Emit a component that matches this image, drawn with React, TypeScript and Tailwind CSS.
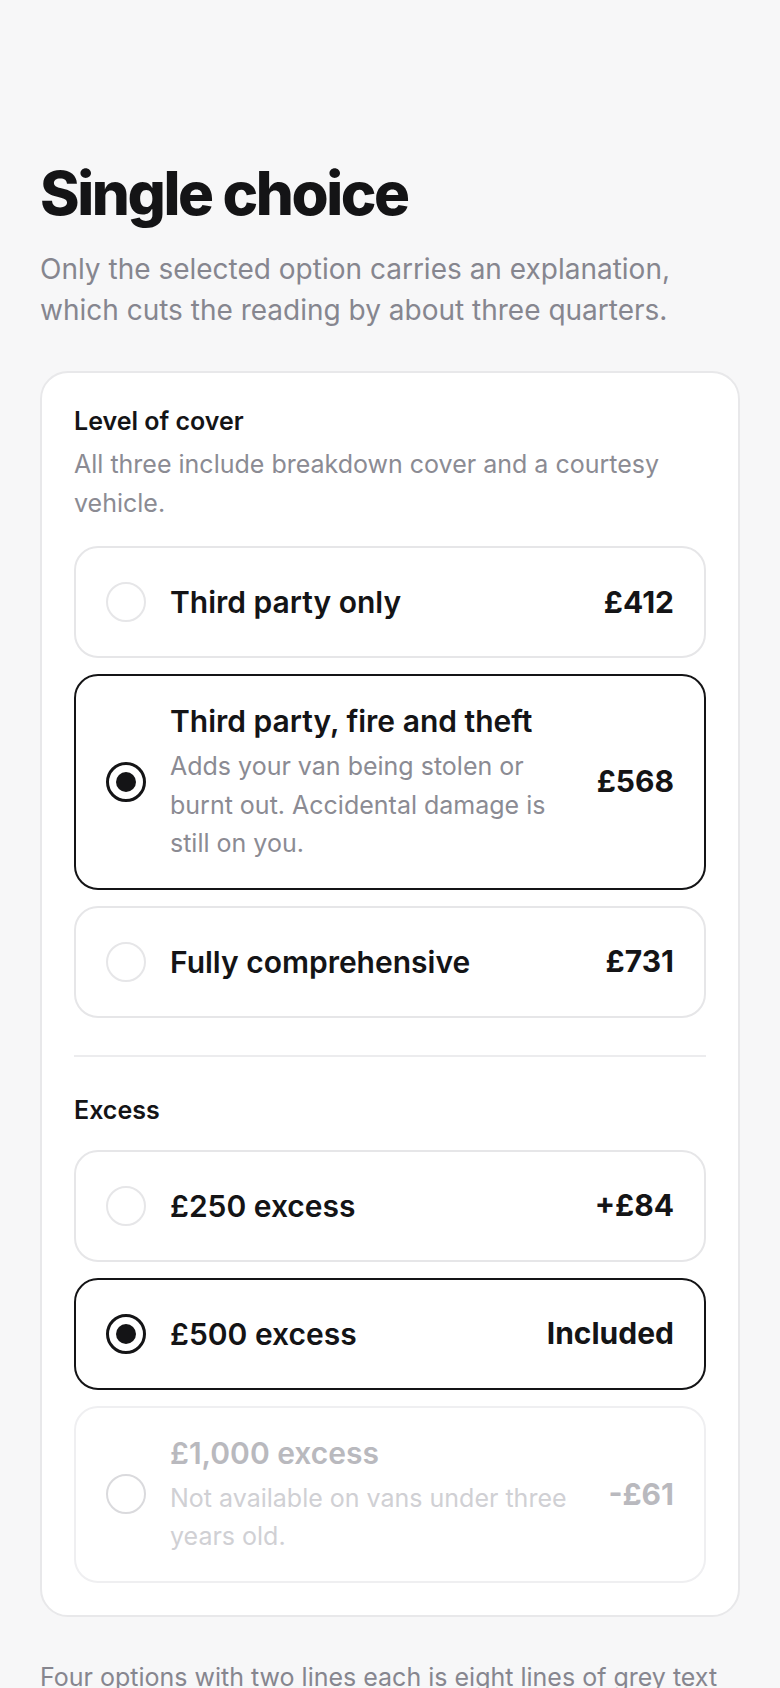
import React from 'react';

type Option = {
  title: string;
  price: string;
  desc?: string;
  selected?: boolean;
  disabled?: boolean;
};

const coverOptions: Option[] = [
  { title: 'Third party only', price: '£412' },
  {
    title: 'Third party, fire and theft',
    price: '£568',
    desc: 'Adds your van being stolen or burnt out. Accidental damage is still on you.',
    selected: true,
  },
  { title: 'Fully comprehensive', price: '£731' },
];

const excessOptions: Option[] = [
  { title: '£250 excess', price: '+£84' },
  { title: '£500 excess', price: 'Included', selected: true },
  {
    title: '£1,000 excess',
    price: '-£61',
    desc: 'Not available on vans under three years old.',
    disabled: true,
  },
];

const Radio: React.FC<{ selected?: boolean; disabled?: boolean }> = ({ selected, disabled }) => {
  if (selected) {
    return (
      <span className="flex h-[40px] w-[40px] shrink-0 items-center justify-center rounded-full border-[3px] border-[#141416] bg-white">
        <span className="h-[20px] w-[20px] rounded-full bg-[#141416]" />
      </span>
    );
  }
  return (
    <span
      className={
        disabled
          ? 'h-[40px] w-[40px] shrink-0 rounded-full border-2 border-[#dadadd] bg-white'
          : 'h-[40px] w-[40px] shrink-0 rounded-full border-2 border-[#e6e6e8] bg-white'
      }
    />
  );
};

const OptionRow: React.FC<{ option: Option }> = ({ option }) => {
  const { title, price, desc, selected, disabled } = option;
  const border = selected
    ? 'border-[#141416]'
    : disabled
    ? 'border-[#efeff1]'
    : 'border-[#e6e6e8]';
  return (
    <div className={`flex items-center gap-[24px] rounded-[24px] border-2 bg-white px-[30px] py-[25px] ${border}`}>
      <Radio selected={selected} disabled={disabled} />
      <div className="flex min-h-[58px] flex-1 flex-col justify-center">
        <div
          className={
            disabled
              ? 'text-[30px] font-semibold leading-[40px] text-[#b9b9be]'
              : 'text-[30px] font-semibold leading-[40px] text-[#141416]'
          }
        >
          {title}
        </div>
        {desc && (
          <div
            className={
              disabled
                ? 'mt-[6px] text-[25px] leading-[38.5px] text-[#d0d0d4]'
                : 'mt-[6px] text-[25px] leading-[38.5px] text-[#8b8b93]'
            }
          >
            {desc}
          </div>
        )}
      </div>
      <div
        className={
          disabled
            ? 'shrink-0 text-[30px] font-bold text-[#b9b9be]'
            : 'shrink-0 text-[30px] font-bold text-[#141416]'
        }
      >
        {price}
      </div>
    </div>
  );
};

export default function App() {
  return (
    <div className="min-h-screen bg-[#f7f7f8] px-[40px] pt-[160px] pb-[60px] font-['Inter',sans-serif]">
      <h1 className="text-[60px] font-extrabold leading-[66px] tracking-[-0.04em] text-[#141416]">Single choice</h1>
      <p className="mt-[23px] text-[28px] leading-[41px] text-[#86868f]">
        Only the selected option carries an explanation, which cuts the reading by about three quarters.
      </p>

      <div className="mt-[40px] rounded-[28px] border-2 border-[#e8e8ea] bg-white p-[32px]">
        {/* Level of cover */}
        <div className="text-[25px] font-semibold leading-[33px] text-[#141416]">Level of cover</div>
        <div className="mt-[7px] text-[25px] leading-[38.5px] text-[#8b8b93]">
          All three include breakdown cover and a courtesy vehicle.
        </div>
        <div className="mt-[24px] flex flex-col gap-[16px]">
          {coverOptions.map((o) => (
            <OptionRow key={o.title} option={o} />
          ))}
        </div>

        <div className="my-[37px] h-[2px] bg-[#ececee]" />

        {/* Excess */}
        <div className="text-[25px] font-semibold leading-[33px] text-[#141416]">Excess</div>
        <div className="mt-[23px] flex flex-col gap-[16px]">
          {excessOptions.map((o) => (
            <OptionRow key={o.title} option={o} />
          ))}
        </div>
      </div>

      <p className="mt-[40px] text-[25px] leading-[40px] text-[#86868f]">
        Four options with two lines each is eight lines of grey text to read before you can choose.
      </p>
    </div>
  );
}
